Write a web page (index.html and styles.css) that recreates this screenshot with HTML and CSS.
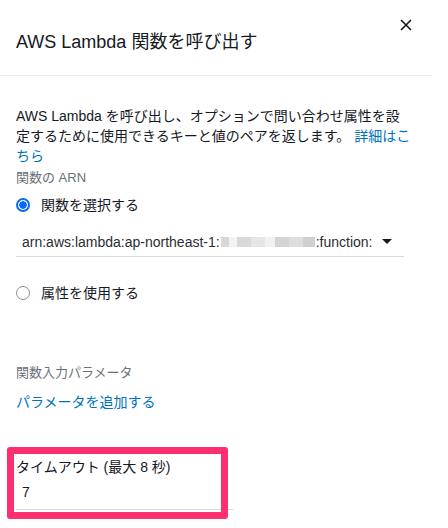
FILE: index.html
```html
<!DOCTYPE html>
<html lang="ja">
<head>
<meta charset="utf-8">
<link rel="stylesheet" href="styles.css">
</head>
<body>
<div class="panel">
  <header class="head">
    <h1 class="title">AWS Lambda 関数を呼び出す</h1>
    <button class="close" aria-label="閉じる">
      <svg width="12" height="12" viewBox="0 0 12 12"><path d="M1 1L11 11M11 1L1 11" stroke="#16191f" stroke-width="1.6" fill="none"/></svg>
    </button>
  </header>
  <div class="body">
    <p class="desc">AWS Lambda を呼び出し、オプションで問い合わせ属性を設定するために使用できるキーと値のペアを返します。 <a class="link" href="#">詳細はこちら</a></p>
    <div class="label">関数の ARN</div>
    <label class="radio-row">
      <span class="radio on"></span>
      <span class="radio-text">関数を選択する</span>
    </label>
    <div class="select">
      <span class="select-text">arn:aws:lambda:ap-northeast-1:<span class="blur"><i></i><i></i><i></i><i></i><i></i><i></i><i></i><i></i></span>:function:</span>
      <span class="caret"></span>
    </div>
    <label class="radio-row second">
      <span class="radio"></span>
      <span class="radio-text">属性を使用する</span>
    </label>
    <div class="label params">関数入力パラメータ</div>
    <a class="link add" href="#">パラメータを追加する</a>
    <div class="timeout">
      <div class="timeout-label">タイムアウト (最大 8 秒)</div>
      <div class="timeout-input">7</div>
      <div class="highlight"></div>
    </div>
  </div>
</div>
</body>
</html>
```
FILE: styles.css
```css
* { box-sizing: border-box; }
html, body { margin: 0; padding: 0; background: #fff; }
body {
  width: 448px;
  height: 528px;
  overflow: hidden;
  font-family: "Liberation Sans", "Noto Sans CJK JP", sans-serif;
  color: #16191f;
}
.panel { width: 432px; }
.head {
  display: flex;
  align-items: flex-start;
  justify-content: space-between;
  height: 76px;
  border-bottom: 1px solid #eaeded;
  padding: 0 20px 0 16px;
}
.title {
  margin: 30px 0 0;
  font-size: 18px;
  font-weight: 400;
  line-height: 24px;
  color: #16191f;
}
.close {
  margin-top: 19px;
  border: 0;
  background: none;
  padding: 0;
  width: 12px;
  height: 12px;
  display: flex;
}
.body { padding: 30px 16px 0 16px; }
.desc {
  margin: 0;
  font-size: 14px;
  line-height: 20px;
  width: 396px;
  color: #16191f;
}
.link { color: #0073bb; text-decoration: none; }
.label {
  margin-top: 3px;
  font-size: 13px;
  line-height: 18px;
  color: #687078;
}
.radio-row {
  display: flex;
  align-items: center;
  gap: 11px;
  margin-top: 6px;
  height: 24px;
  font-size: 14px;
}
.radio {
  width: 14px;
  height: 14px;
  border-radius: 50%;
  border: 1px solid #8d9096;
  flex: none;
}
.radio.on {
  border: 2px solid #0a6cf5;
  background: radial-gradient(circle, #0a6cf5 0 3.5px, #fff 4px);
}
.radio-text { line-height: 20px; }
.select {
  margin-top: 12px;
  width: 388px;
  height: 28px;
  border-bottom: 1px solid #d5dbdb;
  display: flex;
  align-items: center;
  justify-content: space-between;
  padding: 0 12px 2px 6px;
  font-size: 14px;
}
.select-text { display: flex; align-items: center; white-space: nowrap; color: #2a2e33; }
.blur { display: inline-flex; height: 10px; margin: 0 1px; }
.blur i { display: block; height: 10px; }
.blur i:nth-child(1) { background: #d8d8d8; width: 8px; }
.blur i:nth-child(2) { background: #f3f3f3; width: 8px; }
.blur i:nth-child(3) { background: #d9d9d9; width: 14px; }
.blur i:nth-child(4) { background: #e6e6e6; width: 14px; }
.blur i:nth-child(5) { background: #f1f1f1; width: 10px; }
.blur i:nth-child(6) { background: #d4d4d4; width: 14px; }
.blur i:nth-child(7) { background: #dedede; width: 14px; }
.blur i:nth-child(8) { background: #d0d0d0; width: 12px; }
.caret {
  width: 0; height: 0;
  border-left: 5px solid transparent;
  border-right: 5px solid transparent;
  border-top: 5px solid #16191f;
}
.radio-row.second { margin-top: 24px; }
.params { margin-top: 59px; }
.add {
  display: block;
  margin-top: 10px;
  font-size: 14px;
  line-height: 20px;
}
.timeout {
  position: relative;
  margin-top: 46px;
  width: 217px;
}
.timeout-label { font-size: 14px; line-height: 18px; color: #16191f; }
.timeout-input {
  margin-top: 6px;
  height: 28px;
  padding: 0 6px;
  font-size: 14px;
  line-height: 20px;
  border-bottom: 1px solid #d5dbdb;
}
.highlight {
  position: absolute;
  left: -9px;
  top: -11px;
  width: 221px;
  height: 72px;
  border: 7px solid #fe2f6f;
  border-radius: 3px;
}
```
